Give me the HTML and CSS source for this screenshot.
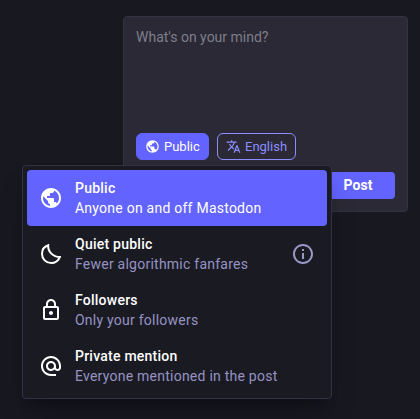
FILE: index.html
```html
<!DOCTYPE html>
<html lang="en">
<head>
<meta charset="utf-8">
<title>Compose</title>
<link rel="stylesheet" href="styles.css">
</head>
<body>
<svg class="defs" aria-hidden="true">
  <symbol id="globe" viewBox="0 0 24 24"><path d="M12 2C6.48 2 2 6.48 2 12s4.480 10 10 10 10-4.480 10-10S17.520 2 12 2zm-1 17.930c-3.950-.49-7-3.850-7-7.930 0-.62.08-1.210.21-1.790L9 15v1c0 1.100.9 2 2 2v1.930zm6.900-2.540c-.26-.81-1-1.390-1.900-1.390h-1v-3c0-.55-.45-1-1-1H8v-2h2c.55 0 1-.45 1-1V7h2c1.100 0 2-.9 2-2v-.41c2.930 1.190 5 4.060 5 7.410 0 2.080-.8 3.970-2.100 5.390z"/></symbol>
</svg>
<main class="compose">
  <div class="input">What's on your mind?</div>
  <div class="options">
    <button class="chip active"><svg class="chip-icon"><use href="#globe"/></svg>Public</button>
    <button class="chip"><svg class="chip-icon" viewBox="0 0 24 24"><path d="M12.870 15.070l-2.540-2.510.03-.03c1.740-1.940 2.980-4.170 3.710-6.530H17V4h-7V2H8v2H1v1.990h11.170C11.500 7.920 10.440 9.750 9 11.350 8.070 10.320 7.300 9.190 6.690 8h-2c.73 1.630 1.730 3.170 2.980 4.560l-5.090 5.020L4 19l5-5 3.110 3.110.76-2.040zM18.500 10h-2L12 22h2l1.120-3h4.750L21 22h2l-4.500-12zm-2.620 7l1.620-4.330L19.120 17h-3.240z"/></svg>English</button>
  </div>
  <div class="submit"><button class="post">Post</button></div>
</main>
<div class="menu">
  <div class="item selected">
    <svg class="icon"><use href="#globe"/></svg>
    <div class="text"><strong>Public</strong><span>Anyone on and off Mastodon</span></div>
  </div>
  <div class="item">
    <svg class="icon" viewBox="0 0 24 24"><path class="line" d="M9.200 3.200C5.400 4.400 3 7.800 3 11.800 3 17 7 21 12.100 21c4 0 7.300-2.300 8.700-5.900C14.200 15 8.700 10 9.200 3.200z"/></svg>
    <div class="text"><strong>Quiet public</strong><span>Fewer algorithmic fanfares</span></div>
    <svg class="icon info" viewBox="0 0 24 24"><path d="M11 7h2v2h-2zm0 4h2v6h-2zm1-9C6.480 2 2 6.480 2 12s4.480 10 10 10 10-4.480 10-10S17.520 2 12 2zm0 18c-4.410 0-8-3.590-8-8s3.590-8 8-8 8 3.590 8 8-3.590 8-8 8z"/></svg>
  </div>
  <div class="item">
    <svg class="icon" viewBox="0 0 24 24"><path d="M18 8h-1V6c0-2.760-2.240-5-5-5S7 3.240 7 6v2H6c-1.100 0-2 .9-2 2v10c0 1.100.9 2 2 2h12c1.100 0 2-.9 2-2V10c0-1.100-.9-2-2-2zM9 6c0-1.660 1.340-3 3-3s3 1.340 3 3v2H9V6zm9 14H6V10h12v10zm-6-3c1.100 0 2-.9 2-2s-.9-2-2-2-2 .9-2 2 .9 2 2 2z"/></svg>
    <div class="text"><strong>Followers</strong><span>Only your followers</span></div>
  </div>
  <div class="item">
    <svg class="icon" viewBox="0 0 24 24"><path d="M12 2C6.480 2 2 6.480 2 12s4.480 10 10 10h5v-2h-5c-4.340 0-8-3.660-8-8s3.660-8 8-8 8 3.660 8 8v1.430c0 .79-.71 1.570-1.500 1.570s-1.500-.78-1.500-1.570V12c0-2.760-2.240-5-5-5s-5 2.240-5 5 2.240 5 5 5c1.380 0 2.640-.56 3.540-1.470.65.89 1.770 1.470 2.960 1.470 1.970 0 3.500-1.600 3.500-3.570V12c0-5.520-4.480-10-10-10zm0 13c-1.660 0-3-1.340-3-3s1.340-3 3-3 3 1.340 3 3-1.340 3-3 3z"/></svg>
    <div class="text"><strong>Private mention</strong><span>Everyone mentioned in the post</span></div>
  </div>
</div>
</body>
</html>
```
FILE: styles.css
```css
* { box-sizing: border-box; }
body {
  margin: 0;
  height: 419px;
  overflow: hidden;
  background: #181821;
  color: #fff;
  font: 14px/20px Roboto, sans-serif;
}
.defs { position: absolute; width: 0; height: 0; }
svg { display: block; flex: none; fill: currentColor; }
.compose {
  display: flex;
  flex-direction: column;
  width: 285px;
  height: 196px;
  margin: 16px 0 0 123px;
  padding: 10px 12px 12px;
  border: 1px solid #333244;
  border-radius: 4px;
  background: #2a2935;
}
.input { flex: 1; color: #7f7e8a; font-size: 14px; }
.options { display: flex; gap: 8px; margin-bottom: 12px; }
.chip {
  display: flex;
  align-items: center;
  gap: 4px;
  height: 27px;
  padding: 0 8px;
  border: 1px solid #8c8dff;
  border-radius: 6px;
  background: none;
  color: #8c8dff;
  font: 13px/20px Roboto, sans-serif;
}
.chip.active { width: 73px; border-color: #6364ff; background: #6364ff; color: #fff; }
.chip:not(.active) { width: 79px; }
.chip-icon { width: 15px; height: 15px; }
.submit { display: flex; justify-content: flex-end; }
.post {
  width: 74px;
  height: 27px;
  padding: 0 0 2px;
  border: 0;
  border-radius: 4px;
  background: #6364ff;
  color: #fff;
  font: 700 14px/20px Roboto, sans-serif;
}
.menu {
  position: absolute;
  left: 22px;
  top: 165px;
  width: 310px;
  padding: 4px;
  border: 1px solid #333244;
  border-radius: 4px;
  background: #1a1a23;
  box-shadow: 0 20px 25px -5px rgba(0,0,0,.25), 0 8px 10px -6px rgba(0,0,0,.25);
}
.item { display: flex; align-items: center; gap: 12px; height: 56px; padding: 8px 12px; border-radius: 4px; }
.selected { background: #6364ff; }
.icon { width: 24px; height: 24px; }
.line { fill: none; stroke: currentColor; stroke-width: 2; stroke-linejoin: miter; }
.info { color: #9b98c8; }
.text { flex: 1; color: #9693c2; letter-spacing: .24px; }
.selected .text { color: #fff; }
.text strong { display: block; color: #fff; font-weight: 500; letter-spacing: .24px; }
.text span { display: block; }
```
